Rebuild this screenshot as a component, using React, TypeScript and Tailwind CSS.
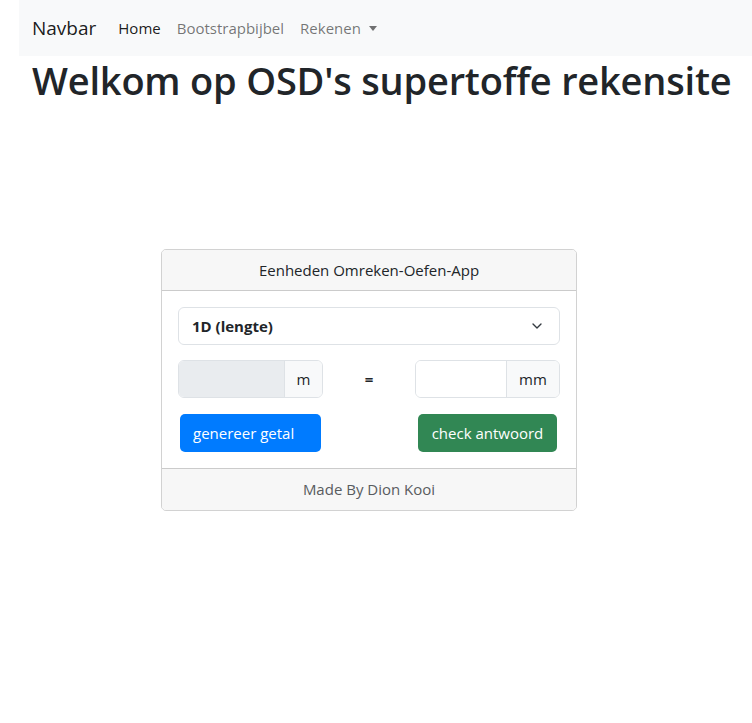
import { ChevronDown } from 'lucide-react';

const FONT = { fontFamily: '"Open Sans", "Noto Sans", "Liberation Sans", sans-serif' };

export default function App() {
  return (
    <div className="min-h-[723px] w-full bg-white text-[#212529]" style={FONT}>
      {/* Navbar */}
      <nav className="ml-[19px] flex h-[56px] items-center bg-[#f8f9fa] px-[13px]">
        <span className="mr-[22px] text-[19px] text-[rgba(0,0,0,0.9)]">Navbar</span>
        <div className="flex items-center gap-[16px] text-[15px]">
          <span className="text-[rgba(0,0,0,0.9)]">Home</span>
          <span className="text-[rgba(0,0,0,0.55)]">Bootstrapbijbel</span>
          <span className="flex items-center gap-[8px] text-[rgba(0,0,0,0.55)]">
            Rekenen
            <span className="h-0 w-0 border-x-[4px] border-t-[5px] border-x-transparent border-t-[rgba(0,0,0,0.55)]" />
          </span>
        </div>
      </nav>

      <h1 className="pl-[32px] text-[38px] font-semibold leading-[48px] tracking-[-0.2px]">
        Welkom op OSD's supertoffe rekensite
      </h1>

      {/* Card */}
      <div className="ml-[161px] mt-[145px] w-[416px] overflow-hidden rounded-[5px] border border-[rgba(0,0,0,0.175)]">
        <div className="flex h-[41px] items-center justify-center border-b border-[rgba(0,0,0,0.175)] bg-[#f7f7f7] text-[15px]">
          Eenheden Omreken-Oefen-App
        </div>

        <div className="flex flex-col px-[16px] pt-[16px] pb-[16px]">
          <div className="flex h-[38px] items-center justify-between rounded-[6px] border border-[#dee2e6] pl-[13px] pr-[14px]">
            <span className="text-[15px] font-bold">1D (lengte)</span>
            <ChevronDown size={16} strokeWidth={2} className="text-[#343a40]" />
          </div>

          <div className="mt-[15px] flex items-center justify-between">
            <div className="flex h-[38px] w-[145px] overflow-hidden rounded-[6px] border border-[#dee2e6]">
              <div className="flex-1 bg-[#e9ecef]" />
              <div className="flex w-[38px] items-center justify-center border-l border-[#dee2e6] bg-[#f8f9fa] text-[15px]">m</div>
            </div>
            <span className="text-[15px] font-bold">=</span>
            <div className="flex h-[38px] w-[145px] overflow-hidden rounded-[6px] border border-[#dee2e6]">
              <div className="flex-1 bg-white" />
              <div className="flex w-[53px] items-center justify-center border-l border-[#dee2e6] bg-[#f8f9fa] text-[15px]">mm</div>
            </div>
          </div>

          <div className="mt-[16px] flex items-center justify-between px-[2px]">
            <button className="flex h-[38px] w-[141px] items-center rounded-[5px] bg-[#007bff] pl-[13px] text-[15px] text-white">
              genereer getal
            </button>
            <button className="mr-[1px] flex h-[38px] w-[139px] items-center justify-center rounded-[5px] bg-[#318754] text-[15px] text-white">
              check antwoord
            </button>
          </div>
        </div>

        <div className="flex h-[42px] items-center justify-center border-t border-[rgba(0,0,0,0.175)] bg-[#f7f7f7] text-[15px] text-[#595c5f]">
          Made By Dion Kooi
        </div>
      </div>
    </div>
  );
}
